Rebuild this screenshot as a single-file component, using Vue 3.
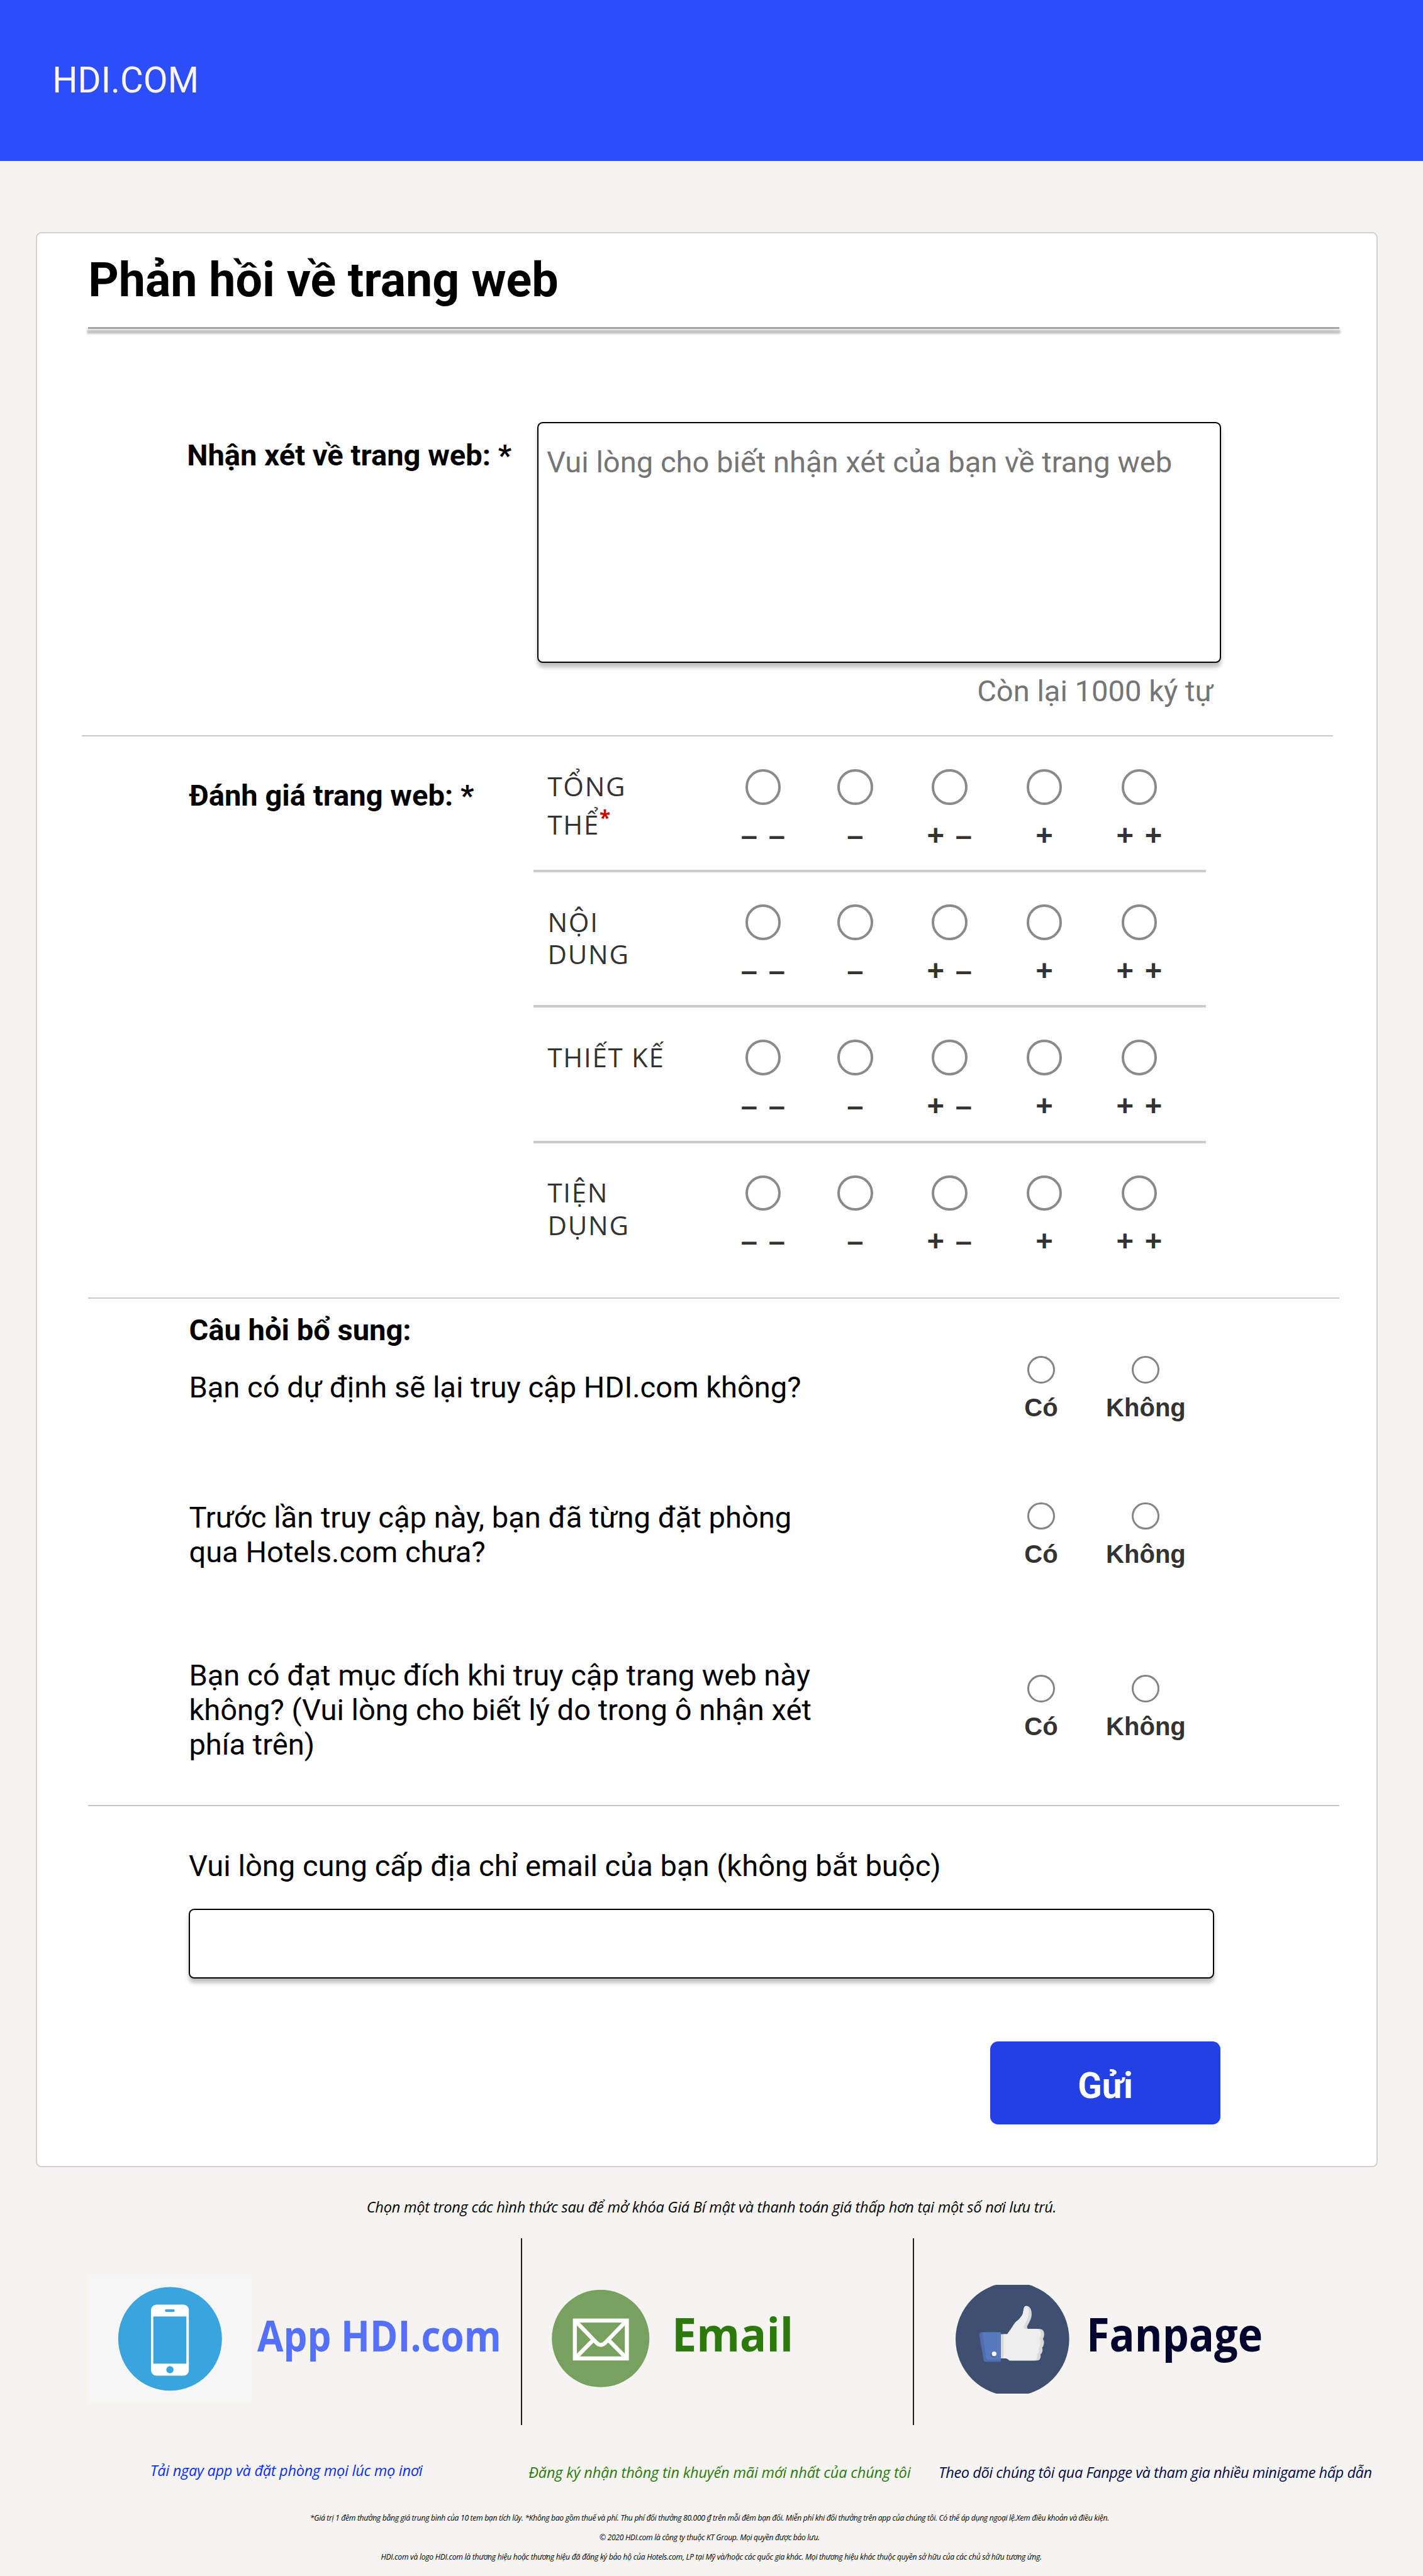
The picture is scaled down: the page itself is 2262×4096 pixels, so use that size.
<script setup>
const ratings = [
  { lines: ['TỔNG', 'THỂ'], required: true },
  { lines: ['NỘI', 'DUNG'] },
  { lines: ['THIẾT KẾ'] },
  { lines: ['TIỆN', 'DỤNG'] },
]
const marks = ['– –', '–', '+ –', '+', '+ +']
const questions = [
  { id: 'return', lines: ['Bạn có dự định sẽ lại truy cập HDI.com không?'] },
  { id: 'booked', lines: ['Trước lần truy cập này, bạn đã từng đặt phòng', 'qua Hotels.com chưa?'] },
  {
    id: 'purpose',
    lines: [
      'Bạn có đạt mục đích khi truy cập trang web này',
      'không? (Vui lòng cho biết lý do trong ô nhận xét',
      'phía trên)',
    ],
  },
]
const answers = ['Có', 'Không']
</script>

<template>
  <div class="page">
    <header class="topbar">HDI.COM</header>

    <main class="card">
      <h1 class="title">Phản hồi về trang web</h1>
      <div class="title-rule"></div>

      <section class="comment">
        <label class="label" for="comment">Nhận xét về trang web: *</label>
        <textarea id="comment" class="box comment-box" placeholder="Vui lòng cho biết nhận xét của bạn về trang web"></textarea>
      </section>
      <p class="counter">Còn lại 1000 ký tự</p>
      <div class="divider divider-wide"></div>

      <section class="rating">
        <div class="label">Đánh giá trang web: *</div>
        <div class="rating-table">
          <div v-for="(row, r) in ratings" :key="r" class="rating-row" :class="{ loose: row.required }">
            <div class="rating-name">
              <div v-for="(line, i) in row.lines" :key="i">
                {{ line }}<span v-if="row.required && i === 1" class="star">*</span>
              </div>
            </div>
            <div v-for="mark in marks" :key="mark" class="rating-cell">
              <span class="radio radio-lg"></span>
              <span class="mark">{{ mark }}</span>
            </div>
          </div>
        </div>
      </section>
      <div class="divider divider-rating"></div>

      <section class="extra">
        <h2 class="extra-title">Câu hỏi bổ sung:</h2>
        <div v-for="q in questions" :key="q.id" class="question" :class="q.id">
          <p class="question-text">
            <span v-for="line in q.lines" :key="line">{{ line }}</span>
          </p>
          <div class="answers">
            <div v-for="a in answers" :key="a" class="answer">
              <span class="radio radio-sm"></span>
              <span class="answer-text">{{ a }}</span>
            </div>
          </div>
        </div>
      </section>
      <div class="divider divider-extra"></div>

      <section class="email">
        <label for="email">Vui lòng cung cấp địa chỉ email của bạn (không bắt buộc)</label>
        <input id="email" class="box email-box" type="text" />
        <button class="submit" type="button">Gửi</button>
      </section>
    </main>

    <footer class="footer">
      <p class="tagline">Chọn một trong các hình thức sau để mở khóa Giá Bí mật và thanh toán giá thấp hơn tại một số nơi lưu trú.</p>

      <div class="channels">
        <div class="channel app">
          <svg class="icon" viewBox="0 0 332 259">
            <rect width="332" height="259" fill="#f6f6f6" />
            <circle cx="166" cy="129.7" r="105" fill="#3aa5dc" />
            <rect x="127.5" y="60.5" width="76.5" height="144" rx="11" fill="#fff" />
            <rect x="132" y="84.5" width="67" height="95.5" fill="#3aa5dc" />
            <rect x="156" y="70" width="19" height="5" rx="1.5" fill="#3aa5dc" />
            <circle cx="165.7" cy="192.3" r="7.4" fill="#3aa5dc" />
          </svg>
          <span class="name">App HDI.com</span>
        </div>
        <div class="channel mail">
          <svg class="icon" viewBox="0 0 198 197">
            <circle cx="99" cy="98.5" r="98.7" fill="#78a15f" />
            <g fill="none" stroke="#fff" stroke-width="8.2">
              <rect x="46.9" y="62.2" width="105.2" height="76.7" />
              <path d="M47 62 L90 106.500 Q99.500 116.500 109 106.500 L152 62" />
              <path d="M47 139 L84 101.500 M152 139 L115 101.500" />
            </g>
          </svg>
          <span class="name">Email</span>
        </div>
        <div class="channel fan">
          <svg class="icon" viewBox="0 0 230 220">
            <circle cx="115" cy="110" r="115" fill="#3e4f70" />
            <path d="M52 96 H91.700 V156 H61 Q57 156 56.500 152 L48 101 Q48 96 52 96 Z" fill="#4e6cae" />
            <path d="M54 96 H91.700 V151.500 H66 Q62.500 151.500 62 148 Z" fill="#5878bd" />
            <circle cx="77" cy="141" r="6" fill="#46619f" />
            <circle cx="78" cy="139.800" r="4.700" fill="#fff" />
            <path d="M91.700 100 H104.300 C110 94 115 84 121.600 75.600 C127 71 132 66 134.800 61.300 C137 57 137 53 138 48 C139 43 143 41.500 147 43.500 C152 46 154 52 154 59.300 C154 70 148 77 144.800 84.600 Q144.500 89 147 89 H168 C177 89 180 94 179.300 102 Q179 107 176.600 109.500 Q180 114 178.600 120 Q178 125 175.300 127 Q177 133 175 136.500 Q174 139.500 172 140.500 Q173 147 170.600 151 Q168 153.600 163.300 153.600 H109 Q105 149 102 149 H91.700 Z" fill="#d9d9d9" />
            <path d="M97 100 H104.300 C110 94 115 84 121.600 75.600 C127 71 132 66 134.800 61.300 C137 57 137 53 138 48 C139 43.500 142 42 144.500 43.500 C148 47 148.500 53 148 60 C147 70 140 78 138 86 Q138 89 142 89 H164 C171 89 173 94 172.500 102 Q172 107 169.500 109.500 Q173 114 171.500 120 Q171 125 168.500 127 Q170 133 168.500 136.500 Q167 139.500 165 140.500 Q166 147 164 151 Q162 153 158 153 H109 Q105 149 102 149 H97 Z" fill="#eee" />
          </svg>
          <span class="name">Fanpage</span>
        </div>
      </div>

      <div class="captions">
        <p class="caption-app">Tải ngay app và đặt phòng mọi lúc mọ inơi</p>
        <p class="caption-mail">Đăng ký nhận thông tin khuyến mãi mới nhất của chúng tôi</p>
        <p class="caption-fan">Theo dõi chúng tôi qua Fanpge và tham gia nhiều minigame hấp dẫn</p>
      </div>

      <div class="legal">
        <p>*Giá trị 1 đêm thưởng bằng giá trung bình của 10 tem bạn tích lũy. *Không bao gồm thuế và phí. Thu phí đổi thưởng 80.000 ₫ trên mỗi đêm bạn đổi. Miễn phí khi đổi thưởng trên app của chúng tôi. Có thể áp dụng ngoại lệ.Xem điều khoản và điều kiện.</p>
        <p>© 2020 HDI.com là công ty thuộc KT Group. Mọi quyền được bảo lưu.</p>
        <p class="trademark">HDI.com và logo HDI.com là thương hiệu hoặc thương hiệu đã đăng ký bảo hộ của Hotels.com, LP tại Mỹ và/hoặc các quốc gia khác. Mọi thương hiệu khác thuộc quyền sở hữu của các chủ sở hữu tương ứng.</p>
      </div>
    </footer>
  </div>
</template>

<style>
html {
  font-size: 78.53px;
}
body {
  margin: 0;
  background: #f5f4f0;
}
</style>

<style scoped>
.page {
  height: 52.16rem;
  overflow: hidden;
  background: #f5f4f0;
  color: #000;
  font: 400 0.6rem/0.7rem Roboto, "Noto Sans", sans-serif;
}
p,
h1,
h2 {
  margin: 0;
}
.topbar {
  box-sizing: border-box;
  display: flex;
  align-items: center;
  height: 3.26rem;
  padding: 0.03rem 0 0 1.06rem;
  background: #2c4efb;
  color: #fdf5f5;
  font-size: 0.72rem;
  line-height: 0.84rem;
}

/* Card */
.card {
  box-sizing: border-box;
  height: 39.18rem;
  margin: 1.44rem 0.92rem 0 0.725rem;
  padding: 0.395rem 0.75rem 0 1.035rem;
  border: 0.026rem solid #d0d0d0;
  border-radius: 0.11rem;
  background: #fff;
}
.title {
  font-size: 0.96rem;
  line-height: 1.12rem;
  font-weight: 700;
}
.title-rule {
  height: 0.04rem;
  margin-top: 0.385rem;
  background: #a5a5a5;
  box-shadow: 0 0.078rem 0.04rem 0.022rem rgba(0, 0, 0, 0.25);
}
.label {
  font-weight: 700;
}
.box {
  box-sizing: border-box;
  border: 0.026rem solid #000;
  border-radius: 0.11rem;
  background: #fff;
  box-shadow: 0 0.08rem 0.08rem rgba(0, 0, 0, 0.25);
  font: inherit;
  outline: none;
}
.divider {
  height: 0.026rem;
  background: #c8c8c8;
}

.comment {
  display: flex;
  margin-top: 1.88rem;
  padding-left: 2rem;
}
.comment .label {
  width: 7.09rem;
  padding-top: 0.325rem;
}
.comment-box {
  display: block;
  width: 13.845rem;
  height: 4.875rem;
  padding: 0.445rem 0.165rem;
  resize: none;
}
.comment-box::placeholder {
  color: #757575;
  opacity: 1;
}
.counter {
  margin-top: 0.225rem;
  padding-right: 2.55rem;
  text-align: right;
  color: #757575;
}
.divider-wide {
  width: 25.33rem;
  margin: 0.54rem 0 0 -0.135rem;
}

/* Rating table */
.rating {
  display: flex;
  margin-top: 0.015rem;
  padding-left: 2.04rem;
}
.rating > .label {
  width: 6.97rem;
  padding-top: 0.835rem;
}
.rating-table {
  width: 13.61rem;
}
.rating-row {
  box-sizing: border-box;
  display: grid;
  grid-template-columns: 3.72rem 1.86rem 1.87rem 1.95rem 1.89rem 1.95rem;
  height: 2.74rem;
  border-bottom: 0.055rem solid #ccc;
}
.rating-row:last-child {
  border-bottom-color: transparent;
}
.rating-name {
  padding: 0.67rem 0 0 0.29rem;
  color: #333;
  font: 400 0.535rem/0.656rem "Open Sans", "Noto Sans", sans-serif;
  letter-spacing: 0.022rem;
}
.loose .rating-name {
  padding-top: 0.613rem;
  line-height: 0.77rem;
}
.star {
  color: #c00;
  font-size: 0.4rem;
  font-weight: 700;
  line-height: 0;
  vertical-align: 0.19rem;
}
.rating-cell {
  display: flex;
  flex-direction: column;
  align-items: center;
  padding-top: 0.65rem;
}
.radio {
  box-sizing: border-box;
  border: 0.045rem solid #848484;
  border-radius: 50%;
}
.radio-lg {
  width: 0.72rem;
  height: 0.72rem;
  border: 0.052rem solid #8a8a8a;
}
.radio-sm {
  width: 0.56rem;
  height: 0.56rem;
}
.mark {
  margin-top: 0.27rem;
  color: #333;
  font: 700 0.6rem/0.7rem "Liberation Sans", Arial, sans-serif;
  word-spacing: 0.06rem;
  white-space: nowrap;
}
.divider-rating {
  margin-top: 0.385rem;
}

/* Extra questions */
.extra {
  padding-left: 2.04rem;
}
.extra-title {
  margin-top: 0.298rem;
  font-size: 0.6rem;
  line-height: 0.7rem;
  font-weight: 700;
}
.question {
  display: flex;
  justify-content: space-between;
  align-items: flex-start;
  padding-right: 2.855rem;
}
.question-text span {
  display: block;
  white-space: nowrap;
}
.answers {
  display: flex;
}
.answer {
  display: flex;
  flex-direction: column;
  align-items: center;
  width: 2.12rem;
}
.answer-text {
  margin-top: 0.18rem;
  color: #333;
  font: 700 0.51rem/0.62rem "Liberation Sans", Arial, sans-serif;
}
.return {
  height: 1.36rem;
  margin-top: 0.162rem;
}
.return .question-text {
  padding-top: 0.287rem;
}
.booked {
  height: 1.4rem;
  margin-top: 1.568rem;
}
.booked .answers {
  padding-top: 0.032rem;
}
.purpose {
  height: 2.1rem;
  margin-top: 1.8rem;
}
.purpose .answers {
  padding-top: 0.331rem;
}
.divider-extra {
  margin-top: 0.86rem;
}

/* Email */
.email {
  display: flex;
  flex-direction: column;
  align-items: flex-start;
  margin-top: 0.87rem;
  padding-left: 2.035rem;
}
.email-box {
  width: 20.76rem;
  height: 1.405rem;
  margin-top: 0.515rem;
}
.submit {
  align-self: flex-end;
  width: 4.66rem;
  height: 1.685rem;
  margin: 1.27rem 2.405rem 0 0;
  padding: 0.15rem 0 0;
  border: 0;
  border-radius: 0.16rem;
  background: #2240e3;
  color: #fff;
  font: 700 0.72rem/0.84rem Roboto, "Noto Sans", sans-serif;
}

/* Footer */
.footer {
  font: italic 400 0.3rem/0.44rem "Open Sans", "Noto Sans", sans-serif;
  white-space: nowrap;
}
.tagline {
  margin-top: 0.584rem;
  text-align: center;
  letter-spacing: -0.003rem;
}
.channels {
  display: grid;
  grid-template-columns: 10.54rem 7.94rem 1fr;
  height: 3.78rem;
  margin-top: 0.416rem;
}
.channel {
  display: flex;
  align-items: flex-start;
}
.mail,
.fan {
  border-left: 0.026rem solid #1c1c1c;
}
.icon {
  display: block;
  flex: none;
}
.name {
  font: 700 0.93rem/1.2rem "Open Sans", "Noto Sans", sans-serif;
  transform-origin: left;
}
.app .icon {
  width: 3.32rem;
  height: 2.59rem;
  margin: 0.745rem 0.11rem 0 1.78rem;
}
.app .name {
  margin-top: 1.366rem;
  color: #5570ff;
  font-size: 0.86rem;
  transform: scaleX(0.89);
}
.mail .icon {
  width: 1.98rem;
  height: 1.97rem;
  margin: 1.05rem 0.45rem 0 0.605rem;
}
.mail .name {
  margin-top: 1.34rem;
  color: #2d7a0c;
  transform: scaleX(0.96);
}
.fan .icon {
  width: 2.3rem;
  height: 2.2rem;
  margin: 0.94rem 0.35rem 0 0.84rem;
}
.fan .name {
  margin-top: 1.34rem;
  color: #03052f;
  transform: scaleX(0.913);
}
.captions {
  display: grid;
  grid-template-columns: 10.54rem 7.94rem 1fr;
  margin-top: 0.724rem;
}
.caption-app {
  padding-left: 3.04rem;
  margin-top: -0.02rem;
  color: #0a2fff;
  letter-spacing: -0.0035rem;
}
.caption-mail {
  margin-top: 0.02rem;
  padding-left: 0.16rem;
  color: #2d7a0c;
  letter-spacing: -0.0022rem;
}
.caption-fan {
  margin-top: 0.02rem;
  padding-left: 0.52rem;
  color: #050a4e;
  letter-spacing: -0.0057rem;
}
.legal {
  margin-top: 0.496rem;
  padding-right: 0.08rem;
  text-align: center;
  font-size: 0.155rem;
  line-height: 0.4rem;
  letter-spacing: -0.004rem;
}
.trademark {
  padding-left: 0.07rem;
  letter-spacing: -0.0035rem;
}
</style>
